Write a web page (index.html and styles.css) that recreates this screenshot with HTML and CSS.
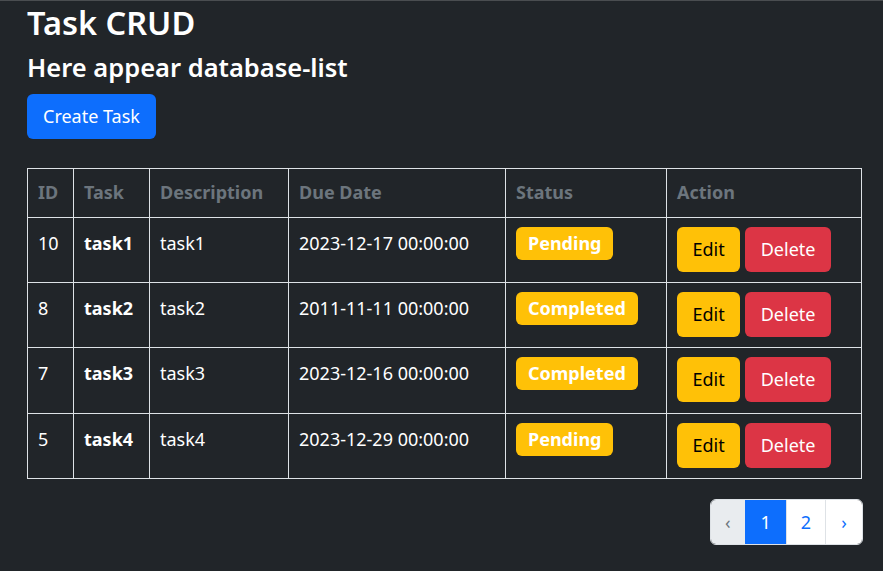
FILE: index.html
```html
<!DOCTYPE html>
<html>
<head>
<meta charset="utf-8">
<link rel="stylesheet" href="styles.css">
</head>
<body>
<div class="topline"></div>
<main class="page">
  <h1 class="title">Task CRUD</h1>
  <h3 class="subtitle">Here appear database-list</h3>
  <button class="btn btn-primary">Create Task</button>
  <table class="tasks">
    <colgroup>
      <col class="c-id"><col class="c-task"><col class="c-desc"><col class="c-due"><col class="c-status"><col class="c-action">
    </colgroup>
    <thead>
      <tr><th>ID</th><th>Task</th><th>Description</th><th>Due Date</th><th>Status</th><th>Action</th></tr>
    </thead>
    <tbody>
      <tr><td>10</td><td class="name">task1</td><td>task1</td><td>2023-12-17 00:00:00</td><td><span class="badge">Pending</span></td><td><div class="actions"><button class="btn btn-warning">Edit</button><button class="btn btn-danger">Delete</button></div></td></tr>
      <tr><td>8</td><td class="name">task2</td><td>task2</td><td>2011-11-11 00:00:00</td><td><span class="badge">Completed</span></td><td><div class="actions"><button class="btn btn-warning">Edit</button><button class="btn btn-danger">Delete</button></div></td></tr>
      <tr><td>7</td><td class="name">task3</td><td>task3</td><td>2023-12-16 00:00:00</td><td><span class="badge">Completed</span></td><td><div class="actions"><button class="btn btn-warning">Edit</button><button class="btn btn-danger">Delete</button></div></td></tr>
      <tr><td>5</td><td class="name">task4</td><td>task4</td><td>2023-12-29 00:00:00</td><td><span class="badge">Pending</span></td><td><div class="actions"><button class="btn btn-warning">Edit</button><button class="btn btn-danger">Delete</button></div></td></tr>
    </tbody>
  </table>
  <nav class="pager">
    <ul class="pagination">
      <li class="pg pg-prev">‹</li>
      <li class="pg pg-active">1</li>
      <li class="pg">2</li>
      <li class="pg pg-next">›</li>
    </ul>
  </nav>
</main>
</body>
</html>
```
FILE: styles.css
```css
* { box-sizing: border-box; }
html, body { margin: 0; padding: 0; }
body {
  background: #212529;
  color: #fff;
  font-family: "Noto Sans", "Open Sans", sans-serif;
  font-size: 18px;
  line-height: 1.5;
  height: 571px;
  overflow: hidden;
}
.topline { height: 1px; background: #4a4d50; }
.page { padding: 0 22px 0 27px; }
.title {
  margin: 0;
  font-size: 32.5px;
  font-weight: 600;
  line-height: 1.2;
  padding-top: 2px;
}
.subtitle {
  margin: 10px 0 0;
  font-size: 25.5px;
  font-weight: 600;
  line-height: 1.2;
}
.btn {
  font-family: inherit;
  font-size: 18px;
  line-height: 1.5;
  border: 1px solid transparent;
  border-radius: 6px;
  padding: 8px 15px;
  cursor: pointer;
}
.btn-primary { background: #0d6efd; color: #fff; margin-top: 11px; display: block; }
.btn-warning { background: #ffc107; color: #000; padding: 8px 14.5px; }
.btn-danger { background: #dc3545; color: #fff; padding: 8px 14.5px; }
.tasks {
  margin-top: 29px;
  width: 834px;
  border-collapse: collapse;
  table-layout: fixed;
}
.c-id { width: 46px; }
.c-task { width: 76px; }
.c-desc { width: 139px; }
.c-due { width: 217px; }
.c-status { width: 161px; }
.c-action { width: 195px; }
.tasks th, .tasks td {
  border: 1px solid #dee2e6;
  padding: 9px 10px;
  text-align: left;
  vertical-align: top;
}
.tasks th {
  color: #6c757d;
  font-weight: 700;
  height: 49px;
  padding-top: 10px;
}
.tasks td { height: 65.4px; padding-top: 12px; }
.tasks td.name { font-weight: 700; }
.tasks td:nth-child(5), .tasks td:nth-child(6) { padding-top: 9px; }
.badge {
  display: inline-block;
  background: #ffc107;
  color: #fff;
  font-weight: 700;
  border-radius: 6px;
  padding: 3px 12px;
  line-height: 1.5;
}
.actions { display: flex; gap: 5px; }
.pager { display: flex; justify-content: flex-end; margin: 20px -2px 0 0; }
.pagination {
  list-style: none;
  margin: 0;
  padding: 0;
  display: flex;
  border-radius: 6px;
  overflow: hidden;
  border: 1px solid #dee2e6;
}
.pg {
  height: 44px;
  padding: 0 14px;
  display: flex;
  align-items: center;
  justify-content: center;
  background: #fff;
  color: #0d6efd;
  font-size: 18px;
  border-left: 1px solid #dee2e6;
}
.pg-prev { background: #e9ecef; color: #6c757d; border-left: none; width: 34px; }
.pg-active { background: #0d6efd; color: #fff; border-left-color: #0d6efd; width: 41px; }
.pg-next { width: 37px; }
```
